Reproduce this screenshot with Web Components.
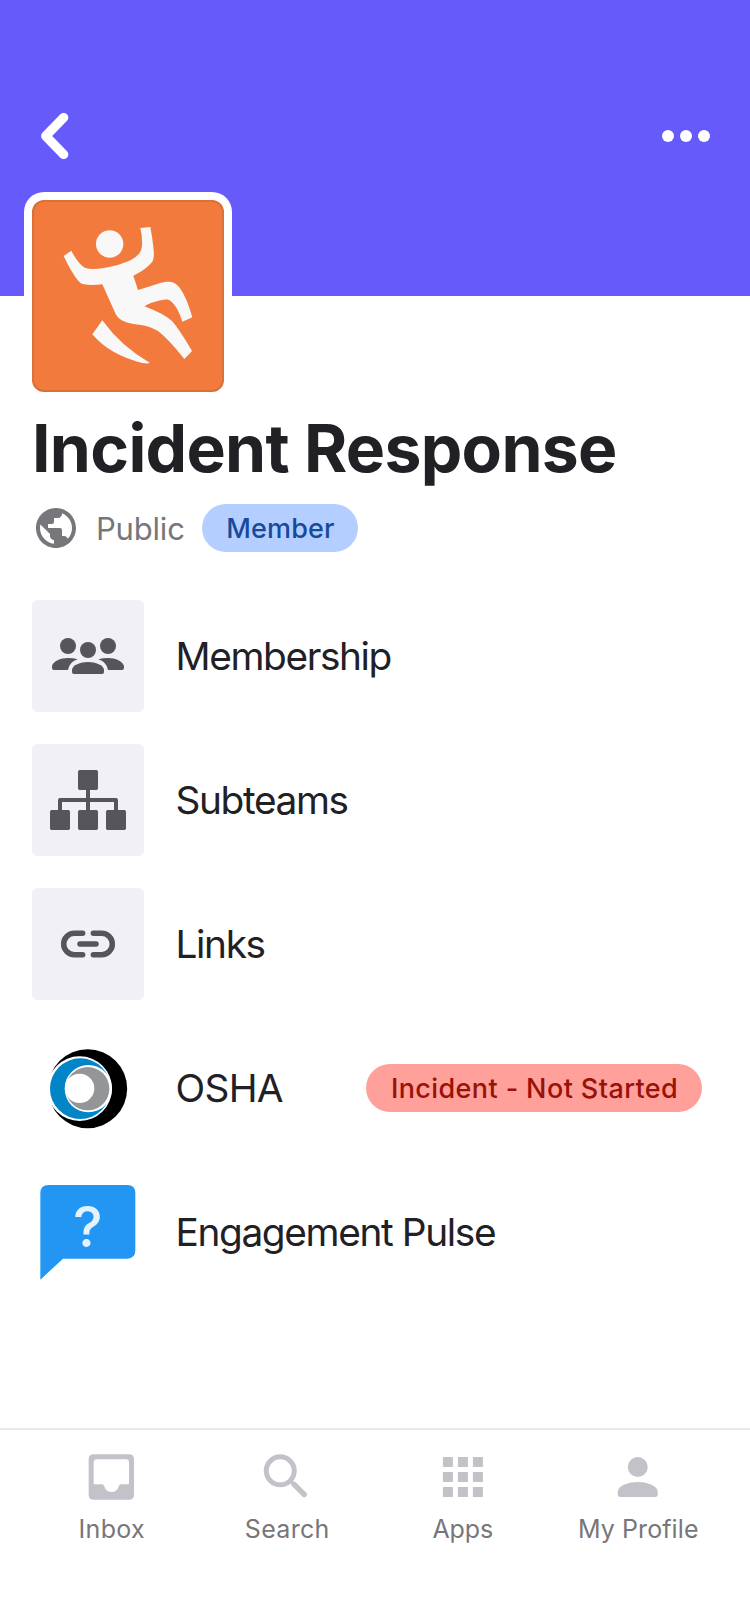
<!DOCTYPE html>
<html lang="en">
<head>
<meta charset="utf-8">
<title>Incident Response</title>
<style>
html, body { margin: 0; height: 100%; background: #fff; }
body { font-family: Inter, "Liberation Sans", sans-serif; color: #212025; overflow: hidden; }
</style>
</head>
<body>
<team-page></team-page>
<script>
const define = (name, html) => {
  const template = document.createElement('template');
  template.innerHTML = html;
  customElements.define(name, class extends HTMLElement {
    constructor() {
      super();
      this.attachShadow({ mode: 'open' }).append(template.content.cloneNode(true));
    }
  });
};

define('team-header', `
<style>
  :host { display: block; box-sizing: border-box; height: 296px; padding: 112px 40px 0; background: #665afb; }
  nav { display: flex; justify-content: space-between; align-items: center; height: 48px; }
  svg { display: block; }
</style>
<nav>
  <svg width="32" height="48" viewBox="40 112 32 48"><path d="M63.7 117.6 45.7 136 63.7 154.4" fill="none" stroke="#fff" stroke-width="9.3" stroke-linecap="round" stroke-linejoin="round"/></svg>
  <svg width="48" height="12" viewBox="0 0 48 12" fill="#fff"><circle cx="6" cy="6" r="6"/><circle cx="24" cy="6" r="6"/><circle cx="42" cy="6" r="6"/></svg>
</nav>`);

define('team-avatar', `
<style>
  :host { display: block; box-sizing: border-box; width: 208px; height: 208px; padding: 8px; background: #fff; border-radius: 20px; }
  div { box-sizing: border-box; width: 192px; height: 192px; border: 2px solid #da6f38; border-radius: 12px; background: #f27a3d; overflow: hidden; }
  svg { display: block; width: 192px; height: 192px; margin: -2px; }
</style>
<div><svg viewBox="96 330 576 576" fill="#f8f8f8">
  <circle cx="329" cy="462" r="41"/>
  <path d="M191 498 214 482Q231 515 248 529Q257 537 276 537Q303 538 353 525Q403 510 416 492Q426 483 426 462Q427 438 421 414L451 411Q458 445 461 481C463 507 460 515 447 526Q430 543 400 557L414 600Q446 590 474 581C507 572 522 573 539 593Q560 621 577 682L547 695Q534 652 513 634C504 625 493 629 476 632Q447 639 433 649Q491 671 516 693Q538 718 576 783L553 807Q505 747 475 724C437 700 408 707 379 697Q355 688 347 672L307 583Q272 587 253 583Q241 581 232 569Q215 548 191 498Z"/>
  <path d="M307 691Q363 769 449 818Q445 822 427 819Q329 795 277 733Z"/>
</svg></div>`);

define('status-pill', `
<style>
  :host { display: flex; align-items: center; justify-content: center; box-sizing: border-box; flex: none; width: var(--pill-width); height: 48px; padding: 1px 0 0 1px; border-radius: 24px; background: var(--pill-bg); color: var(--pill-color); font-size: 27px; font-weight: 500; line-height: 48px; letter-spacing: var(--pill-spacing, 0); white-space: nowrap; }
</style>
<slot></slot>`);

define('team-summary', `
<style>
  :host { display: block; padding: 16px 32px 0; }
  h1 { margin: 0; font-size: 66px; line-height: 80px; font-weight: 700; letter-spacing: -0.69px; white-space: nowrap; }
  .status { display: flex; align-items: center; height: 48px; margin-top: 16px; }
  svg { width: 48px; height: 48px; flex: none; }
  .visibility { padding: 1px 0 0 16px; box-sizing: border-box; width: 122px; font-size: 31px; line-height: 48px; letter-spacing: -0.2px; color: #77767b; }
  status-pill { --pill-width: 156px; --pill-bg: #b4cfff; --pill-color: #184a9c; --pill-spacing: 0.15px; }
</style>
<h1>Incident Response</h1>
<div class="status">
  <svg viewBox="0 0 24 24" fill="#77767b"><path d="M12 2C6.48 2 2 6.48 2 12s4.48 10 10 10 10-4.48 10-10S17.52 2 12 2zm-1 17.93c-3.95-.49-7-3.85-7-7.93 0-.62.08-1.21.21-1.79L9 15v1c0 1.1.9 2 2 2v1.93zm6.9-2.54c-.26-.81-1-1.39-1.9-1.39h-1v-3c0-.55-.45-1-1-1H8v-2h2c.55 0 1-.45 1-1V7h2c1.1 0 2-.9 2-2v-.41c2.93 1.19 5 4.06 5 7.41 0 2.08-.8 3.97-2.1 5.39z"/></svg>
  <span class="visibility">Public</span>
  <status-pill>Member</status-pill>
</div>`);

define('team-row', `
<style>
  :host { display: flex; align-items: center; height: 112px; }
  .tile { width: 112px; height: 112px; border-radius: 6px; background: var(--tile-bg, #f1f0f6); overflow: hidden; flex: none; }
  .label { flex: 1; padding-left: 31.5px; font-size: 38.8px; line-height: 56px; letter-spacing: var(--label-spacing, -1.37px); white-space: nowrap; }
  ::slotted(svg) { display: block; width: 112px; height: 112px; }
</style>
<div class="tile"><slot name="icon"></slot></div>
<div class="label"><slot></slot></div>
<slot name="status"></slot>`);

define('team-menu', `
<style>
  :host { display: flex; flex-direction: column; gap: 32px; padding: 48px 48px 0 32px; }
  .plain { --tile-bg: transparent; }
  .osha { --label-spacing: -0.7px; }
  status-pill { --pill-width: 336px; --pill-bg: #ffa19a; --pill-color: #991107; --pill-spacing: 0.4px; }
</style>
<team-row>
  <svg slot="icon" viewBox="36 30 336 336" fill="#565559">
    <circle cx="144" cy="168" r="24"/><circle cx="264" cy="168" r="24"/><circle cx="204" cy="180" r="24"/>
    <path d="M156 246V240C156 225 182 216 204 216S252 225 252 240V246Q252 252 246 252H162Q156 252 156 246Z"/>
    <path d="M96 234V229C98 214 122 204 144 204Q160 204 173 208Q147 217 144 240H102Q96 240 96 234ZM312 234V229C310 214 286 204 264 204Q248 204 235 208Q261 217 264 240H306Q312 240 312 234Z"/>
  </svg>Membership
</team-row>
<team-row>
  <svg slot="icon" viewBox="36 12 336 336" fill="#565559">
    <rect x="174" y="90" width="60" height="60" rx="5"/><rect x="90" y="210" width="60" height="60" rx="5"/><rect x="174" y="210" width="60" height="60" rx="5"/><rect x="258" y="210" width="60" height="60" rx="5"/>
    <path d="M204 148V212M120 212V180H288V212" fill="none" stroke="#565559" stroke-width="12" stroke-linejoin="round"/>
  </svg>Subteams
</team-row>
<team-row>
  <svg slot="icon" viewBox="36 444 336 336" fill="none" stroke="#565559" stroke-width="16.500" stroke-linecap="round">
    <path d="M188 580H163A32 32 0 0 0 163 644H188M220 580H245A32 32 0 0 1 245 644H220M180 612H228"/>
  </svg>Links
</team-row>
<team-row class="plain osha">
  <svg slot="icon" viewBox="36 36 336 336">
    <circle cx="203" cy="206" r="118.5"/>
    <path d="M80 158L98 157L120 206L98 255L80 254Z" fill="#fff"/>
    <circle cx="179" cy="206" r="97" fill="#fff"/>
    <circle cx="181" cy="206" r="91" fill="#0285c7"/>
    <circle cx="205" cy="206" r="71" fill="#fff"/>
    <circle cx="203" cy="206" r="65" fill="#939598"/>
    <circle cx="179" cy="205" r="44" fill="#fff"/>
  </svg>OSHA
  <status-pill slot="status">Incident - Not Started</status-pill>
</team-row>
<team-row class="plain">
  <svg slot="icon" viewBox="36 468 336 336">
    <path d="M61 520Q61 495 86 495H322Q346 495 346 520V691Q346 716 322 716H129L61 779Z" fill="#2396f3"/>
    <text x="203" y="680" text-anchor="middle" font-family="Inter, sans-serif" font-weight="500" font-size="168" fill="#e3f2fd">?</text>
  </svg>Engagement Pulse
</team-row>`);

define('tab-item', `
<style>
  :host { display: flex; flex-direction: column; align-items: center; flex: 1; padding-top: 17px; color: #77767b; font-size: 25px; line-height: 32px; letter-spacing: var(--tab-spacing, 0.3px); white-space: nowrap; }
  ::slotted(svg) { display: block; width: 60px; height: 60px; margin-bottom: 6px; fill: #c3c2c8; }
</style>
<slot name="icon"></slot><span><slot></slot></span>`);

define('tab-bar', `
<style>
  :host { display: flex; box-sizing: border-box; height: 196px; padding: 0 24px; border-top: 2px solid #e8e7ec; background: #fff; }
  .apps { --tab-spacing: -0.1px; }
  .profile { --tab-spacing: 0.1px; }
</style>
<tab-item>
  <svg slot="icon" viewBox="96 96 180 180"><path fill-rule="evenodd" d="M131 118H237Q252 118 252 133V239Q252 254 237 254H131Q116 254 116 239V133Q116 118 131 118ZM140 133Q131 133 131 142V208H155Q160 208 162 212Q168 231 185 231Q201 231 207 212Q209 208 214 208H237V142Q237 133 228 133Z"/></svg>Inbox
</tab-item>
<tab-item>
  <svg slot="icon" viewBox="621.75 96 180 180"><g fill="none" stroke="#c3c2c8"><circle cx="691.5" cy="167.500" r="42" stroke-width="15"/><path d="M733 208L763.500 238.500" stroke-width="16" stroke-linecap="round"/><path d="M720 196L730 206" stroke-width="9"/></g></svg>Search
</tab-item>
<tab-item class="apps">
  <svg slot="icon" viewBox="98.25 96 180 180"><path d="M128 126h30v30h-30zM173 126h30v30h-30zM218 126h30v30h-30zM128 171h30v30h-30zM173 171h30v30h-30zM218 171h30v30h-30zM128 216h30v30h-30zM173 216h30v30h-30zM218 216h30v30h-30z"/></svg>Apps
</tab-item>
<tab-item class="profile">
  <svg slot="icon" viewBox="624.75 96 180 180"><circle cx="714" cy="156" r="30"/><path d="M654 238V231C654 211 688 201 714 201S774 211 774 231V238Q774 246 766 246H662Q654 246 654 238Z"/></svg>My Profile
</tab-item>`);

define('team-page', `
<style>
  :host { display: flex; flex-direction: column; width: 750px; height: 1624px; background: #fff; }
  team-avatar { position: relative; margin: -104px 0 0 24px; }
  tab-bar { margin-top: auto; }
  team-summary { margin-top: -8px; }
</style>
<team-header></team-header>
<team-avatar></team-avatar>
<team-summary></team-summary>
<team-menu></team-menu>
<tab-bar></tab-bar>`);
</script>
</body>
</html>
